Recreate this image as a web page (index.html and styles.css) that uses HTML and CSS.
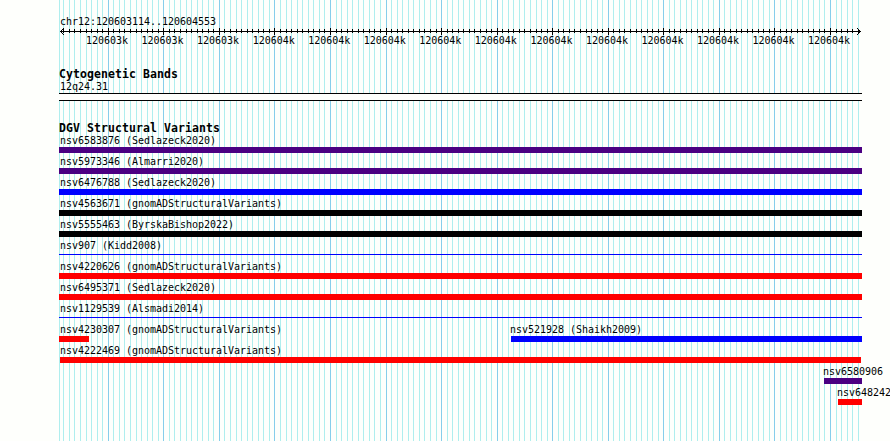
FILE: index.html
```html
<!DOCTYPE html>
<html lang="en">
<head>
<meta charset="utf-8">
<title>chr12:120603114..120604553</title>
<link rel="stylesheet" href="styles.css">
</head>
<body>
<main class="browser">
  <svg class="grid" id="grid" width="890" height="441" shape-rendering="crispEdges" aria-hidden="true"></svg>
  <header class="ruler">
    <div class="region">chr12:120603114..120604553</div>
    <svg class="axis" id="axis" width="803" height="9" shape-rendering="crispEdges" aria-hidden="true"></svg>
    <div class="ticks" id="ticks"></div>
  </header>
  <section class="cyto">
    <h2>Cytogenetic Bands</h2>
    <div class="label">12q24.31</div>
    <div class="band"></div>
  </section>
  <section class="variants">
    <h2>DGV Structural Variants</h2>
    <div class="row"><div class="feature"><span class="label">nsv6583876 (Sedlazeck2020)</span><div class="bar purple"></div></div></div>
    <div class="row"><div class="feature"><span class="label">nsv5973346 (Almarri2020)</span><div class="bar purple"></div></div></div>
    <div class="row"><div class="feature"><span class="label">nsv6476788 (Sedlazeck2020)</span><div class="bar blue"></div></div></div>
    <div class="row"><div class="feature"><span class="label">nsv4563671 (gnomADStructuralVariants)</span><div class="bar black"></div></div></div>
    <div class="row"><div class="feature"><span class="label">nsv5555463 (ByrskaBishop2022)</span><div class="bar black"></div></div></div>
    <div class="row"><div class="feature"><span class="label">nsv907 (Kidd2008)</span><div class="bar thin blue"></div></div></div>
    <div class="row"><div class="feature"><span class="label">nsv4220626 (gnomADStructuralVariants)</span><div class="bar red"></div></div></div>
    <div class="row"><div class="feature"><span class="label">nsv6495371 (Sedlazeck2020)</span><div class="bar red"></div></div></div>
    <div class="row"><div class="feature"><span class="label">nsv1129539 (Alsmadi2014)</span><div class="bar thin blue"></div></div></div>
    <div class="row split">
      <div class="feature" style="width:30px"><span class="label">nsv4230307 (gnomADStructuralVariants)</span><div class="bar red"></div></div>
      <div class="feature late" style="width:351px"><span class="label">nsv521928 (Shaikh2009)</span><div class="bar blue"></div></div>
    </div>
    <div class="row inset"><div class="feature"><span class="label">nsv4222469 (gnomADStructuralVariants)</span><div class="bar red"></div></div></div>
    <div class="row end"><div class="feature late" style="width:38px"><span class="label">nsv6580906</span><div class="bar purple"></div></div></div>
    <div class="row end"><div class="feature late" style="width:24px"><span class="label">nsv648242</span><div class="bar red"></div></div></div>
  </section>
</main>
<script src="script.js"></script>
</body>
</html>
```
FILE: styles.css
```css
* { box-sizing: border-box; }

body {
  margin: 0;
  background: #fefffc;
  color: #000;
  font: 10px/13px "DejaVu Sans Mono", "Liberation Mono", monospace;
  letter-spacing: -0.02px;
}

.browser {
  position: relative;
  width: 890px;
  height: 441px;
  padding: 15px 28px 0 59px;
  overflow: hidden;
}

.grid {
  position: absolute;
  inset: 0;
  z-index: -1;
}

.region, .label {
  display: block;
  height: 13px;
  padding-left: 1px;
  white-space: pre;
}

.axis { display: block; margin-top: -1px; }

.ticks {
  display: flex;
  margin: -2px -28px 0 22px;
  height: 14px;
}

.ticks span { flex: none; width: 55.5556px; padding-left: 5px; }

h2 {
  margin: 0;
  height: 13px;
  font-size: 11.5px;
  line-height: 13px;
  font-weight: bold;
  letter-spacing: 0.077px;
  white-space: pre;
}

.cyto { margin-top: 20px; }
.cyto .label { height: 13px; margin-top: -1px; }

.band {
  height: 8px;
  border: solid #000;
  border-width: 1px 0;
  background: #fefffc;
}

.variants { margin-top: 21px; }
.variants h2 { height: 12px; }

.row { display: flex; height: 21px; }
.feature { width: 803px; }
.split { justify-content: space-between; }
.end { justify-content: flex-end; }
.inset { padding: 0 1px; }
.inset .label { padding-left: 0; }
.late .label { padding-left: 0; margin-left: -1px; }

.bar { height: 6px; }
.thin { height: 1px; margin-top: 2px; }
.purple { background: #4b0082; }
.blue { background: #00f; }
.black { background: #000; }
.red { background: #f00; }

.minor { fill: #afeeee; }
.major { fill: #87ceeb; }
```
FILE: script.js
```js
const NS = "http://www.w3.org/2000/svg";
const grid = document.getElementById("grid");
const axis = document.getElementById("axis");
const ticks = document.getElementById("ticks");
const LEFT = 59;
const FIRST_MAJOR = 108.25;
const STEP = 50 / 9;

function rect(parent, x, y, width, height, cls) {
  const r = document.createElementNS(NS, "rect");
  Object.entries({ x, y, width, height }).forEach(([k, v]) => r.setAttribute(k, v));
  if (cls) r.setAttribute("class", cls);
  parent.appendChild(r);
}

rect(grid, LEFT, 0, 1, 441, "minor");
rect(axis, 1, 4, 801, 1);
for (let i = -8; i <= 135; i++) {
  const x = Math.floor(FIRST_MAJOR + i * STEP);
  const major = i % 10 === 0;
  rect(grid, x, 0, 1, 441, major ? "major" : "minor");
  rect(axis, x - LEFT, major ? 1 : 2, 1, major ? 7 : 4);
}
for (let d = 1; d <= 3; d++) {
  for (const y of [4 - d, 4 + d]) {
    rect(axis, 1 + d, y, 1, 1);
    rect(axis, 801 - d, y, 1, 1);
  }
}
for (let k = 0; k < 14; k++) {
  const label = document.createElement("span");
  label.textContent = k < 3 ? "120603k" : "120604k";
  ticks.appendChild(label);
}
```
